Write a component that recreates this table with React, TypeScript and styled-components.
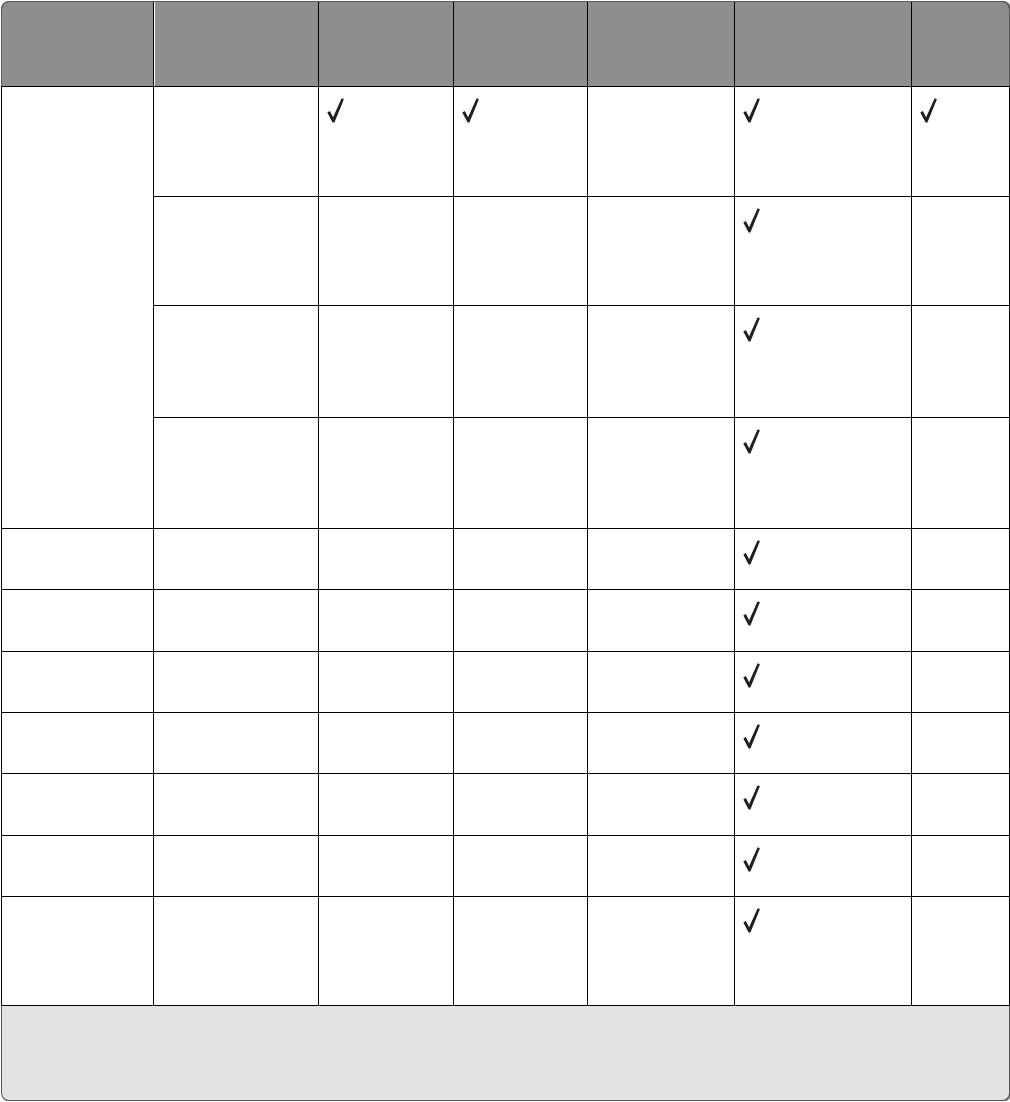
import React from "react";
import styled, { createGlobalStyle } from "styled-components";

const GlobalStyle = createGlobalStyle`
  html, body {
    margin: 0;
    padding: 0;
    background: #ffffff;
    font-family: "Liberation Sans", Arial, sans-serif;
  }
`;

const COLS = "151px 164px 134px 133px 146px 176px 97px";
const ROWS = [109, 108, 111, 110, 60, 61, 60, 60, 61, 60, 108];

const Frame = styled.div`
  width: 1009px;
  margin: 1px 0 0 1px;
`;

const Header = styled.div`
  box-sizing: border-box;
  display: grid;
  grid-template-columns: ${COLS};
  column-gap: 1px;
  height: 85px;
  background: #000;
  border: 1px solid #5a5a5a;
  border-bottom: none;
  border-radius: 8px 8px 0 0;
  overflow: hidden;
  box-shadow: 1px 0 0 #7a7a7a;
`;

const HeadCell = styled.div<{ $light?: boolean }>`
  background: #8e8e8e;
  box-shadow: ${(p) => (p.$light ? "inset 1px 0 0 #ffffff" : "none")};
`;

const Body = styled.div`
  display: grid;
  grid-template-columns: ${COLS};
  grid-template-rows: ${ROWS.map((r) => `${r}px`).join(" ")};
  gap: 1px;
  padding: 1px;
  background: #000;
`;

const Cell = styled.div<{ $span?: number }>`
  background: #ffffff;
  padding: 11px 0 0 8px;
  grid-row: ${(p) => (p.$span ? `span ${p.$span}` : "auto")};
`;

const Footer = styled.div`
  box-sizing: border-box;
  height: 95px;
  background: #e4e4e4;
  border: 1px solid #555555;
  border-top: none;
  border-radius: 0 0 8px 8px;
  box-shadow: 1px 1px 0 #8a8a8a;
`;

const CheckSvg = styled.svg`
  display: block;
  width: 17px;
  height: 25px;
`;

const Check = () => (
  <CheckSvg viewBox="0 0 17 25" aria-hidden="true">
    <path
      d="M0.3 14.6 L2.9 13.1 L6.1 19.2 L14.6 0.2 L16.9 1.3 L7.4 24.6 L5.6 24.6 Z"
      fill="#231f20"
    />
  </CheckSvg>
);

type Row = boolean[];

// checks for columns 2..7
const rows: Row[] = [
  [false, true, true, false, true, true],
  [false, false, false, false, true, false],
  [false, false, false, false, true, false],
  [false, false, false, false, true, false],
  [false, false, false, false, true, false],
  [false, false, false, false, true, false],
  [false, false, false, false, true, false],
  [false, false, false, false, true, false],
  [false, false, false, false, true, false],
  [false, false, false, false, true, false],
  [false, false, false, false, true, false],
];

export default function App() {
  return (
    <>
      <GlobalStyle />
      <Frame>
        <Header>
          {Array.from({ length: 7 }).map((_, i) => (
            <HeadCell key={i} $light={i === 1} />
          ))}
        </Header>
        <Body>
          {rows.map((checks, r) => (
            <React.Fragment key={r}>
              {r === 0 && <Cell $span={4} />}
              {r >= 4 && <Cell />}
              {checks.map((c, ci) => (
                <Cell key={ci}>{c && <Check />}</Cell>
              ))}
            </React.Fragment>
          ))}
        </Body>
        <Footer />
      </Frame>
    </>
  );
}
